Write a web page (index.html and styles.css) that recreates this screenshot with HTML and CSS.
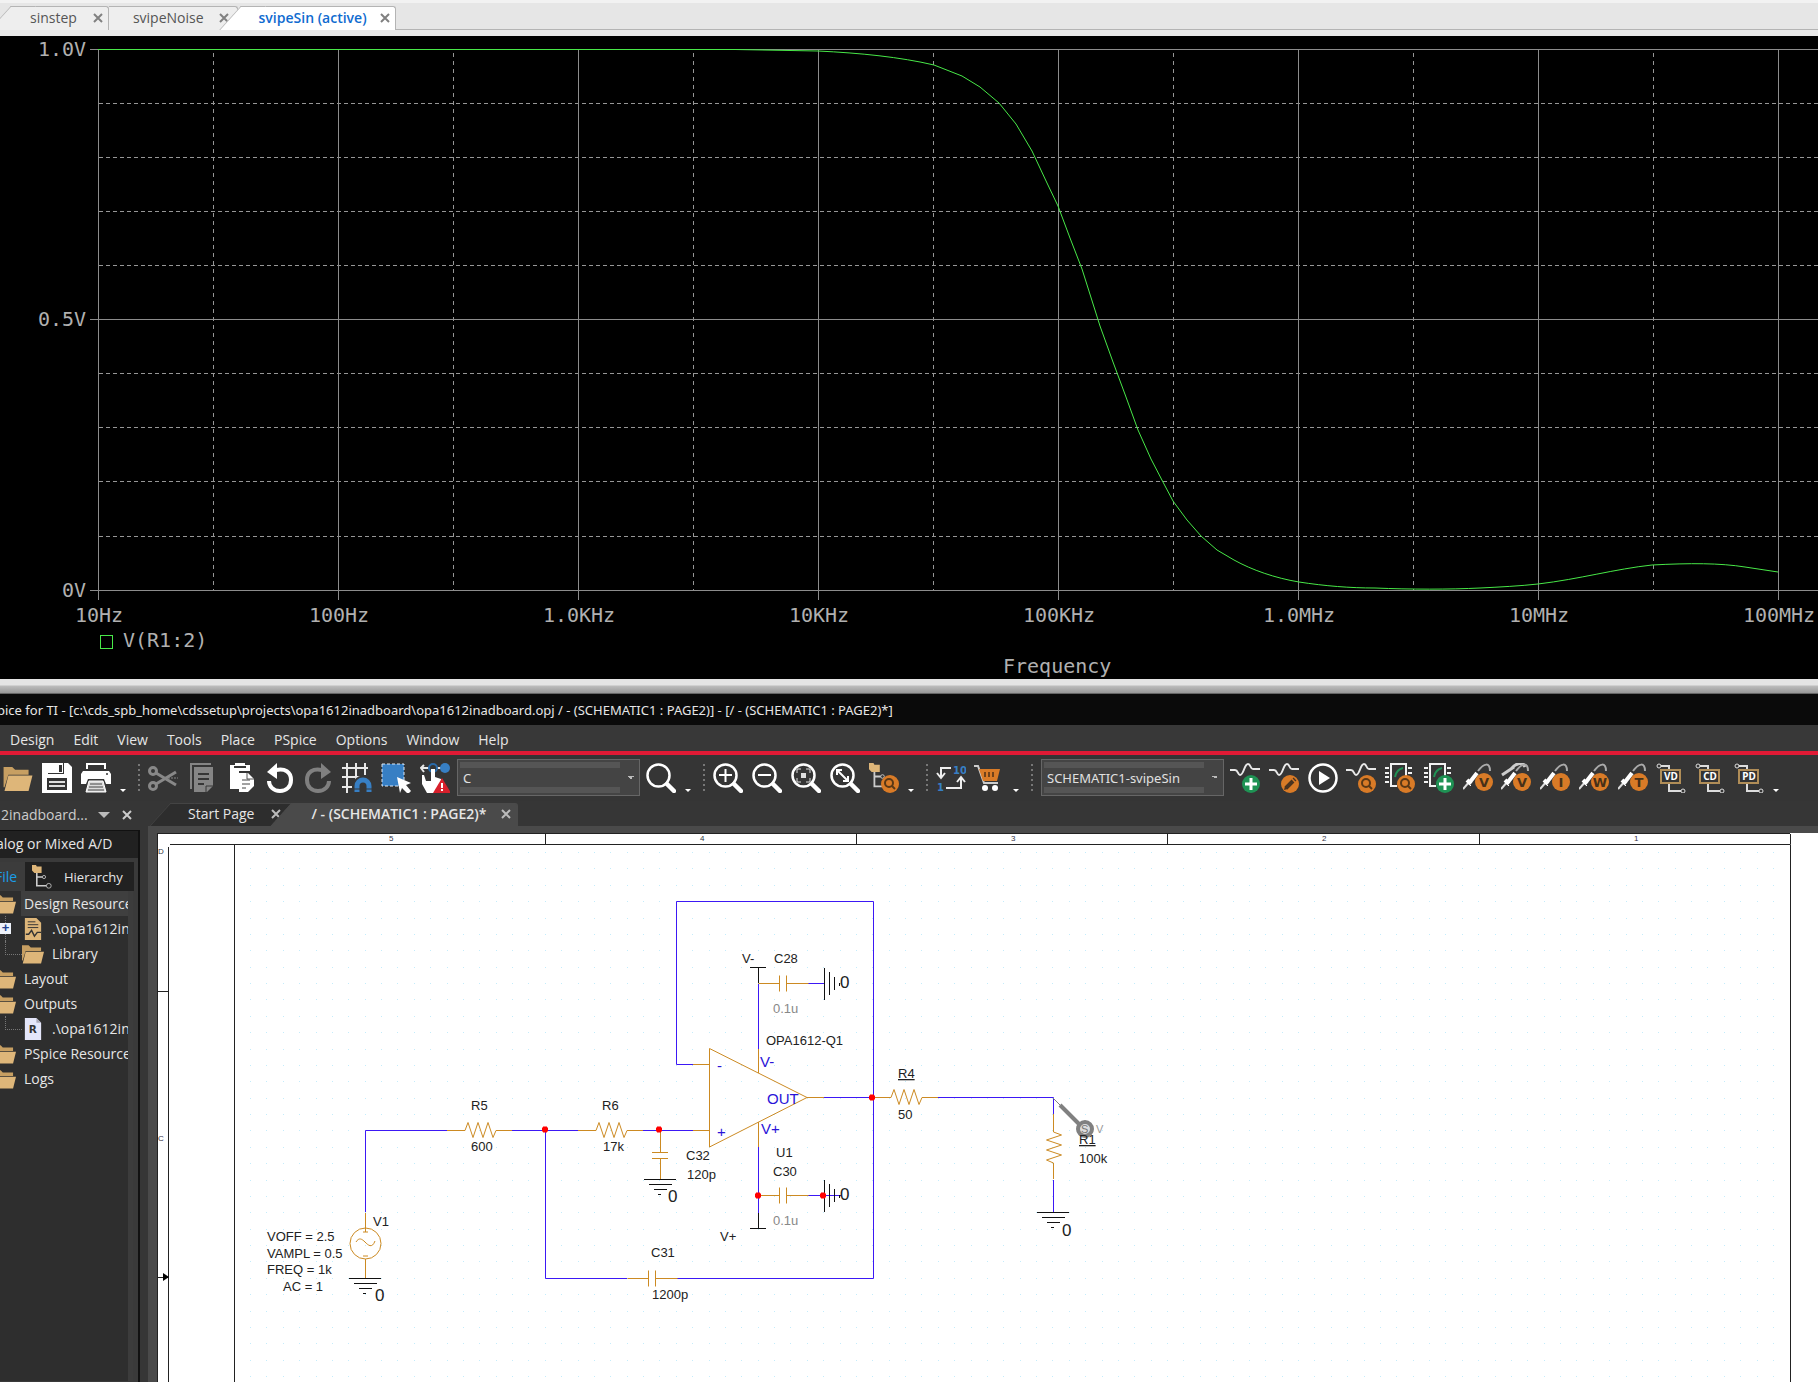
FILE: index.html
```html
<!DOCTYPE html>
<html lang="en">
<head>
<meta charset="utf-8">
<title>PSpice for TI</title>
<link rel="stylesheet" href="styles.css">
</head>
<body>

<svg class="defs" aria-hidden="true">
  <defs>
    <symbol id="close" viewBox="0 0 10 10"><path d="M1 1l8 8M9 1l-8 8" fill="none" stroke="currentColor" stroke-width="2"/></symbol>
    <symbol id="folder" viewBox="0 0 30 26">
      <path d="M0 1h9l3 3h14v5H5L1 22H0z" fill="#c79f62"/>
      <path d="M5 10h25l-4 16H1z" fill="#deb679"/>
    </symbol>
    <symbol id="lens" viewBox="0 0 30 30">
      <circle cx="12.500" cy="12.500" r="11" fill="none" stroke="#fff" stroke-width="2.500"/>
      <path d="M21 21l7 7" stroke="#fff" stroke-width="4.500" stroke-linecap="round"/>
    </symbol>
    <symbol id="wave" viewBox="0 0 30 30">
      <path d="M0 7h5c3 0 3 5 5 5 4 0 4-11 8-11 3 0 2 5 5 5h7" fill="none" stroke="#e8e8e8" stroke-width="2"/>
    </symbol>
    <symbol id="plus" viewBox="0 0 30 30">
      <circle cx="21" cy="21" r="9" fill="#1f9254"/>
      <path d="M21 15v12M15 21h12" stroke="#fff" stroke-width="3"/>
    </symbol>
    <symbol id="find" viewBox="0 0 30 30">
      <circle cx="21" cy="21" r="9" fill="#d97b27"/>
      <circle cx="20" cy="20" r="4" fill="none" stroke="#5a3816" stroke-width="2"/>
      <path d="M23 23l3 3" stroke="#5a3816" stroke-width="2"/>
    </symbol>
    <symbol id="chip" viewBox="0 0 30 30">
      <path d="M12 23H6V1h15v14M0 5h4M0 10h4M0 14h4M0 19h4M23 5h4M23 10h4" fill="none" stroke="#f2f2f2" stroke-width="2"/>
      <path d="M10 14c1-5 3-8 8-9" fill="none" stroke="#1f9254" stroke-width="2"/>
    </symbol>
    <symbol id="probe" viewBox="0 0 30 30">
      <path d="M15 8c6-8 12-9 12 0" fill="none" stroke="#aaa" stroke-width="2"/>
      <path d="M0 26l7-8" stroke="#ddd" stroke-width="2"/>
      <path d="M4 17l4 4M7 19l7-9" stroke="#fff" stroke-width="4"/>
      <path d="M3 18l5 5" stroke="#fff" stroke-width="1"/>
      <circle cx="21" cy="19" r="9" fill="#d97b27"/>
    </symbol>
    <symbol id="diff" viewBox="0 0 30 30">
      <path d="M4 3h9v5M13 20v8h12" fill="none" stroke="#ddd" stroke-width="2"/>
      <circle cx="3" cy="3" r="2" fill="#363636" stroke="#ddd"/>
      <circle cx="27" cy="28" r="2" fill="#363636" stroke="#ddd"/>
      <rect x="5" y="7" width="19" height="13" fill="#333" stroke="#b08d57" stroke-width="2"/>
    </symbol>
    <symbol id="tree" viewBox="0 0 30 30">
      <path d="M0 0h5l1 2h6v8H3L0 7z" fill="#deb679"/>
      <path d="M6 10v16h12M6 15h7" fill="none" stroke="#ccc" stroke-width="2"/>
      <circle cx="15" cy="15" r="2" fill="none" stroke="#ccc" stroke-width="1"/>
      <circle cx="21" cy="26" r="3" fill="none" stroke="#ccc" stroke-width="1"/>
    </symbol>
  </defs>
</svg>

<header class="plot-tabs" role="tablist">
  <div class="tab slanted"><button role="tab">sinstep</button><button class="close" aria-label="Close sinstep"><svg><use href="#close"/></svg></button></div>
  <div class="tab"><button role="tab">svipeNoise</button><button class="close" aria-label="Close svipeNoise"><svg><use href="#close"/></svg></button></div>
  <div class="tab slanted active"><button role="tab" aria-selected="true">svipeSin (active)</button><button class="close" aria-label="Close svipeSin"><svg><use href="#close"/></svg></button></div>
</header>

<svg class="plot" viewBox="0 36 1818 643" role="img" aria-label="V(R1:2) over frequency">
  <g class="dashed across">
    <path d="M99 103.500H1818M99 157.500H1818M99 211.500H1818M99 265.500H1818M99 373.500H1818M99 427.500H1818M99 481.500H1818M99 536.500H1818"/>
  </g>
  <g class="dashed down">
    <path d="M213.500 53V590M453.500 53V590M693.500 53V590M933.500 53V590M1173.500 53V590M1413.500 53V590M1653.500 53V590"/>
  </g>
  <path class="axis" d="M90 49.500H1818M90 319.500H1818M90 590.500H1818M98.500 49V600M338.500 49V600M578.500 49V600M818.500 49V600M1058.500 49V600M1298.500 49V600M1538.500 49V600M1778.500 49V600"/>
  <path class="trace" d="M98 49.500H735L818 51C860 53 900 57 934 65L962 76 980 87 999 103 1016 124 1032 151 1047 183 1058 206 1070 238 1082 269 1100 326 1113 362 1126 397 1138 430 1151 459 1164 484 1173 501 1187 520 1201 536 1217 550 1234 560C1252 570 1275 578 1299 582 1325 586 1350 588 1375 588 1410 589.500 1450 589.500 1480 588 1500 587 1520 586 1538 584 1580 579 1615 569 1652 565 1690 563 1720 563 1745 567L1778 572"/>
  <g class="plot-text">
    <text x="38" y="56">1.0V</text><text x="38" y="326">0.5V</text><text x="62" y="597">0V</text>
    <g text-anchor="middle">
      <text x="99" y="622">10Hz</text><text x="339" y="622">100Hz</text><text x="579" y="622">1.0KHz</text><text x="819" y="622">10KHz</text>
      <text x="1059" y="622">100KHz</text><text x="1299" y="622">1.0MHz</text><text x="1539" y="622">10MHz</text><text x="1779" y="622">100MHz</text>
    </g>
    <text x="123" y="647">V(R1:2)</text>
    <text x="1003" y="673">Frequency</text>
  </g>
  <rect class="trace" x="100.500" y="635.500" width="12" height="13"/>
</svg>

<div class="splitter"></div>

<div class="titlebar">pice for TI - [c:\cds_spb_home\cdssetup\projects\opa1612inadboard\opa1612inadboard.opj / - (SCHEMATIC1 : PAGE2)] - [/ - (SCHEMATIC1 : PAGE2)*]</div>

<nav class="menubar">
  <button>Design</button><button>Edit</button><button>View</button><button>Tools</button><button>Place</button><button>PSpice</button><button>Options</button><button>Window</button><button>Help</button>
</nav>

<div class="toolbar" role="toolbar">
  <div class="icons files">
    <button aria-label="Open"><svg viewBox="0 0 30 30"><use href="#folder" y="3" width="30" height="25"/></svg></button>
    <button aria-label="Save"><svg viewBox="0 0 30 30"><path fill="#fff" d="M0 0h26l4 4v26H0z"/><path fill="#333" d="M6 0h16v11H6zM5 15h20v12H5z"/><path fill="#fff" d="M6 0h15v10H6z"/><path fill="#333" d="M17 2h3v7h-3z"/><path d="M7 19h16M7 23h16" stroke="#ddd" stroke-width="2"/></svg></button>
    <button aria-label="Print"><svg viewBox="0 0 30 30"><path d="M6 6V1h18v5" fill="none" stroke="#fff" stroke-width="2"/><path fill="#fff" d="M2 8h26l2 3v10h-5l-2-5H7l-2 5H0V11z"/><path fill="#ddd" stroke="#fff" d="M8 18h14l3 11H5z"/><path d="M9 21h12M8 24h14M7 27h16" stroke="#444"/><circle cx="26" cy="11" r="1" fill="#333"/></svg></button>
  </div>
  <i class="caret"></i>
  <i class="grip"></i>
  <div class="icons edit">
    <button aria-label="Cut"><svg viewBox="0 0 30 30"><g fill="none" stroke="#888" stroke-width="3"><circle cx="5" cy="8" r="3.500"/><circle cx="5" cy="23" r="3.500"/><path d="M8 10l20 12M8 21L28 9"/></g><path d="M20 15h10" stroke="#888" stroke-dasharray="2 1"/></svg></button>
    <button aria-label="Copy"><svg viewBox="0 0 30 30"><path d="M4 26V1h20" fill="none" stroke="#858585" stroke-width="2"/><path fill="#858585" d="M7 4h19v19l-6 6H7z"/><path d="M11 11h11M11 16h11M11 21h6" stroke="#363636" stroke-width="2"/><path d="M19 30v-7h7" fill="none" stroke="#363636"/></svg></button>
    <button aria-label="Paste"><svg viewBox="0 0 30 30"><path fill="#fff" d="M4 2h5V0h10v2h5v6H13v18H4z"/><path d="M8 4h12" stroke="#363636" stroke-width="2"/><path fill="#fff" d="M13 10h9l6 6v7l-6 6H13z"/><path d="M16 17h8M16 21h8M16 25h4" stroke="#444" stroke-width="1"/><path d="M21 10v6h7" fill="none" stroke="#555"/></svg></button>
    <button aria-label="Undo"><svg viewBox="0 0 30 30"><path d="M11 7c9-2 15 2 15 10 0 7-5 11-11 11-7 0-11-5-11-10" fill="none" stroke="#fff" stroke-width="4"/><path fill="#fff" d="M2 9l10-9v16z"/></svg></button>
    <button aria-label="Redo"><svg viewBox="0 0 30 30"><path d="M19 7C10 5 4 9 4 17c0 7 5 11 11 11 7 0 11-5 11-10" fill="none" stroke="#808080" stroke-width="4"/><path fill="#808080" d="M28 9L18 0v16z"/></svg></button>
    <button aria-label="Snap to grid"><svg viewBox="0 0 30 30"><path d="M0 5h26M0 14h20M0 24h10M5 0v30M14 0v17M23 0v12" fill="none" stroke="#e8e8e8" stroke-width="2"/><path d="M14 29v-6a7 7 0 0 1 14 0v6" fill="none" stroke="#363636" stroke-width="7"/><path d="M15 29v-6a6 6 0 0 1 12 0v6" fill="none" stroke="#377fc4" stroke-width="5"/><path d="M12 26h6M24 26h6" stroke="#363636"/></svg></button>
    <button aria-label="Area select"><svg viewBox="0 0 30 30"><rect x="1" y="1" width="22" height="22" fill="#377fc4" stroke="#dbe9f7" stroke-dasharray="3 2"/><path fill="#fff" d="M16 14l14 6-5 2 5 6-3 3-6-6-2 5z"/></svg></button>
    <button aria-label="Drag connected"><svg viewBox="0 0 30 30"><path d="M1 5h8M4 2L1 5l3 4M17 5h6" fill="none" stroke="#e8e8e8" stroke-width="2"/><circle cx="13" cy="5" r="4" fill="none" stroke="#2a6aa8" stroke-width="2"/><circle cx="25" cy="5" r="5" fill="#377fc4"/><path fill="#fff" d="M11 6h4v8l6 2v14H7l-5-9V12h2l2 6h5z"/><path fill="#d8202c" d="M22 15l9 15H13z"/><path d="M22 20v5M22 26v2" stroke="#fff" stroke-width="2"/></svg></button>
  </div>
  <select class="combo" aria-label="Part"><option>C</option></select>
  <div class="icons"><button aria-label="Search"><svg viewBox="0 0 30 30"><use href="#lens"/></svg></button></div>
  <i class="caret"></i>
  <i class="grip"></i>
  <div class="icons zoom">
    <button aria-label="Zoom in"><svg viewBox="0 0 30 30"><use href="#lens"/><path d="M6 12h13M12.500 6v13" stroke="#fff" stroke-width="2"/></svg></button>
    <button aria-label="Zoom out"><svg viewBox="0 0 30 30"><use href="#lens"/><path d="M6 12h13" stroke="#fff" stroke-width="2"/></svg></button>
    <button aria-label="Zoom to selection"><svg viewBox="0 0 30 30"><use href="#lens"/><rect x="10" y="10" width="5" height="5" fill="#ddd"/><path d="M6 10V6h4M15 6h4v4M19 15v4h-4M10 19H6v-4" fill="none" stroke="#ddd" stroke-width="1"/></svg></button>
    <button aria-label="Zoom to fit"><svg viewBox="0 0 30 30"><use href="#lens"/><path d="M7 7l11 11M7 12V7h5M18 13v5h-5" fill="none" stroke="#fff" stroke-width="2"/></svg></button>
    <button aria-label="Find in hierarchy"><svg viewBox="0 0 30 30"><use href="#tree" width="27" height="27"/><use href="#find"/></svg></button>
  </div>
  <i class="caret"></i>
  <i class="grip"></i>
  <div class="icons swap">
    <button aria-label="Renumber"><svg viewBox="0 0 30 30"><path d="M15 5H5v9M1 10l4 5 4-5M10 25h15V15M21 19l4-5 4 5" fill="none" stroke="#eee" stroke-width="2"/><text class="num" x="17" y="11">10</text><text class="num" x="1" y="28">1</text></svg></button>
    <button aria-label="Part cart"><svg viewBox="0 0 30 30"><path d="M0 3h4l6 17h14" fill="none" stroke="#ccc" stroke-width="2"/><path fill="#d97b27" d="M5 6h21l-3 12H9z"/><path d="M11 9v5M15 9v5M19 9v5" stroke="#70421a" stroke-width="2"/><circle cx="11" cy="25" r="3" fill="#fff"/><circle cx="21" cy="25" r="3" fill="#fff"/></svg></button>
  </div>
  <i class="caret"></i>
  <i class="grip"></i>
  <select class="combo" aria-label="Simulation profile"><option>SCHEMATIC1-svipeSin</option></select>
  <div class="icons sim">
    <button aria-label="New profile"><svg viewBox="0 0 30 30"><use href="#wave"/><use href="#plus"/></svg></button>
    <button aria-label="Edit profile"><svg viewBox="0 0 30 30"><use href="#wave"/><circle cx="21" cy="21" r="9" fill="#d97b27"/><path d="M17 25l7-7M25 17l1-1" stroke="#4a3320" stroke-width="4"/><path d="M15 27l1-4 3 3z" fill="#4a3320"/></svg></button>
    <button aria-label="Run"><svg viewBox="0 0 30 30"><circle cx="15" cy="15" r="13.500" fill="none" stroke="#fff" stroke-width="2.500"/><path fill="#fff" d="M11 8l11 7-11 7z"/></svg></button>
    <button aria-label="View results"><svg viewBox="0 0 30 30"><use href="#wave"/><use href="#find"/></svg></button>
    <button aria-label="Find model"><svg viewBox="0 0 30 30"><use href="#chip"/><use href="#find"/></svg></button>
    <button aria-label="Add model"><svg viewBox="0 0 30 30"><use href="#chip"/><use href="#plus"/></svg></button>
    <button aria-label="Voltage marker"><svg viewBox="0 0 30 30"><use href="#probe"/><text class="mark" x="21" y="24">V</text></svg></button>
    <button aria-label="Differential marker"><svg viewBox="0 0 30 30"><path d="M1 12l12-8M10 6c5-6 12-8 14-2" fill="none" stroke="#ccc" stroke-width="3"/><use href="#probe"/><text class="mark" x="21" y="24">V</text></svg></button>
    <button aria-label="Current marker"><svg viewBox="0 0 30 30"><use href="#probe"/><text class="mark" x="21" y="24">I</text></svg></button>
    <button aria-label="Power marker"><svg viewBox="0 0 30 30"><use href="#probe"/><text class="mark" x="21" y="24">W</text></svg></button>
    <button aria-label="Temperature marker"><svg viewBox="0 0 30 30"><use href="#probe"/><text class="mark" x="21" y="24">T</text></svg></button>
    <button aria-label="Voltage density"><svg viewBox="0 0 30 30"><use href="#diff"/><text class="tag" x="15" y="17">VD</text></svg></button>
    <button aria-label="Current density"><svg viewBox="0 0 30 30"><use href="#diff"/><text class="tag" x="15" y="17">CD</text></svg></button>
    <button aria-label="Power density"><svg viewBox="0 0 30 30"><use href="#diff"/><text class="tag" x="15" y="17">PD</text></svg></button>
  </div>
  <i class="caret"></i>
</div>

<main class="workspace">
  <aside class="project">
    <div class="project-head"><span>2inadboard...</span><i class="down"></i><button class="close" aria-label="Close project"><svg><use href="#close"/></svg></button></div>
    <div class="project-body">
      <div class="kind">alog or Mixed A/D</div>
      <div class="views" role="tablist">
        <button role="tab" aria-selected="true" class="view on">File</button>
        <button role="tab" class="view"><svg class="view-icon"><use href="#tree"/></svg>Hierarchy</button>
      </div>
      <ul class="files-tree">
        <li class="row selected"><svg class="fold"><use href="#folder"/></svg><span>Design Resources</span></li>
        <li class="row child plus"><svg class="fold" viewBox="0 0 23 23"><path fill="#deb679" d="M3 0h12l5 5v18H3z"/><path d="M6 4h8M6 7h11M6 10h11" stroke="#333"/><path d="M4 17h3l3-4 3 6 3-4h4" fill="none" stroke="#333" stroke-width="1.500"/></svg><span>.\opa1612inadboard</span></li>
        <li class="row child last"><svg class="fold"><use href="#folder"/></svg><span>Library</span></li>
        <li class="row"><svg class="fold"><use href="#folder"/></svg><span>Layout</span></li>
        <li class="row"><svg class="fold"><use href="#folder"/></svg><span>Outputs</span></li>
        <li class="row child last"><svg class="fold" viewBox="0 0 23 23"><path fill="#e4e6fa" d="M3 0h12l5 5v18H3z"/><path fill="#aab" d="M15 0l5 5h-5z"/><text class="report" x="7" y="16">R</text></svg><span>.\opa1612inadboard</span></li>
        <li class="row"><svg class="fold"><use href="#folder"/></svg><span>PSpice Resources</span></li>
        <li class="row"><svg class="fold"><use href="#folder"/></svg><span>Logs</span></li>
      </ul>
    </div>
  </aside>

  <section class="editor">
    <div class="doc-tabs" role="tablist">
      <div class="tab slanted"><button role="tab">Start Page</button><button class="close" aria-label="Close Start Page"><svg><use href="#close"/></svg></button></div>
      <div class="tab slanted active"><button role="tab" aria-selected="true">/ - (SCHEMATIC1 : PAGE2)*</button><button class="close" aria-label="Close PAGE2"><svg><use href="#close"/></svg></button></div>
    </div>
    <div class="sheet">
    <svg class="schematic" viewBox="157 833 1661 549" role="img" aria-label="Schematic page 2">
      <defs>
        <pattern id="dots" x="250" y="852" width="131" height="131" patternUnits="userSpaceOnUse">
          <g fill="none" stroke="#c4ecfb">
            <path id="dotrow" d="M0 .5h1M16 .5h1M33 .5h1M49 .5h1M66 .5h1M82 .5h1M98 .5h1M115 .5h1"/>
            <use href="#dotrow" y="16"/><use href="#dotrow" y="33"/><use href="#dotrow" y="49"/><use href="#dotrow" y="66"/><use href="#dotrow" y="82"/><use href="#dotrow" y="98"/><use href="#dotrow" y="115"/>
          </g>
        </pattern>
        <path id="res" d="M0 0h18l3-8 5 15 5-15 5 15 5-15 5 15 3-7h16"/>
        <path id="cap" d="M0 0h21M21-8V8M28-8V8M28 0h22"/>
        <path id="gnd" d="M-16 0h32M-11 5h23M-6 10h13M-2 15h3"/>
      </defs>
      <rect x="240" y="848" width="1548" height="534" fill="url(#dots)"/>
      <path class="frame" d="M157 833.500H1790M157.500 833V1382M170 844.500H1790.500V1382M168.500 847V1382M234.500 844V1382M545.500 834V844M856.500 834V844M1167.500 834V844M1479.500 834V844M1790.500 834V844M157 991.500H168M157 1277.500H168"/>
      <path d="M163 1273l6 4-6 4z"/>
      <g class="zone"><text x="389" y="841">5</text><text x="700" y="841">4</text><text x="1011" y="841">3</text><text x="1322" y="841">2</text><text x="1634" y="841">1</text><text x="158" y="854">D</text><text x="158" y="1141">C</text></g>

      <path class="wire" d="M693 1064.500H676.500V901.500H873.500V1278.500H676M758.500 984V1049M808 983.500H824M824 1097.500H873M758.500 1147V1213M808 1195.500H841M365.500 1212V1130.500H447M512 1130.500H578M545.500 1131V1278.500H627M643 1130.500H693M938 1097.500H1053.500V1114M1053.500 1180V1212"/>
      <g class="part">
        <path d="M709.500 1048.500V1147L807 1097.500ZM693 1064.500H709M693 1130.500H709M807 1097.500H824M758.500 1049V1073M758.500 1122V1147"/>
        <use href="#res" x="447" y="1130.500"/><use href="#res" x="578" y="1130.500"/><use href="#res" x="873" y="1097.500"/>
        <use href="#res" transform="translate(1053.500 1114) rotate(90)"/>
        <use href="#cap" x="758.500" y="983.500"/><use href="#cap" x="758.500" y="1195.500"/><use href="#cap" x="627.500" y="1278.500"/>
        <path d="M660.500 1131V1152M652 1152.500H668M652 1158.500H668M660.500 1159V1179"/>
        <path d="M365.500 1213V1232M365.500 1259V1278M363 1232h5M363 1256h5M356 1242c3-5 6-3 9 0s7 7 10-1"/>
        <circle cx="365.500" cy="1243.500" r="15.500"/>
      </g>
      <g class="ground">
        <use href="#gnd" x="660" y="1179.500"/><use href="#gnd" x="365" y="1278.500"/><use href="#gnd" x="1053" y="1212.500"/>
        <use href="#gnd" transform="translate(824.500 984) rotate(-90)"/><use href="#gnd" transform="translate(824.500 1196) rotate(-90)"/>
        <path d="M750 967.500H766M758.500 968V983M750 1228.500H766M758.500 1213V1228"/>
      </g>
      <path class="joint" d="M659 1126.500v6M656 1129.500h6M545 1126.500v6M542 1129.500h6M872 1094.500v6M869 1097.500h6M758 1192.500v6M755 1195.500h6M823 1192.500v6M820 1195.500h6"/>
      <g class="pin"><text x="760" y="1067">V-</text><text x="761" y="1134">V+</text><text x="767" y="1104">OUT</text><text x="717" y="1071">-</text><text x="717" y="1137">+</text></g>
      <g class="label">
        <text x="742" y="963">V-</text><text x="774" y="963">C28</text><text x="766" y="1045">OPA1612-Q1</text>
        <text x="776" y="1157">U1</text><text x="773" y="1176">C30</text><text x="720" y="1241">V+</text>
        <text x="686" y="1160">C32</text><text x="687" y="1179">120p</text><text x="651" y="1257">C31</text><text x="652" y="1299">1200p</text>
        <text x="471" y="1110">R5</text><text x="471" y="1151">600</text><text x="602" y="1110">R6</text><text x="603" y="1151">17k</text>
        <text x="373" y="1226">V1</text><text x="267" y="1241">VOFF = 2.5</text><text x="267" y="1258">VAMPL = 0.5</text><text x="267" y="1274">FREQ = 1k</text><text x="283" y="1291">AC = 1</text>
        <text x="898" y="1078" text-decoration="underline">R4</text><text x="898" y="1119">50</text>
        <text x="1079" y="1163">100k</text>
      </g>
      <g class="label pale"><text x="773" y="1013">0.1u</text><text x="773" y="1225">0.1u</text></g>
      <g class="zero"><text x="840" y="988">0</text><text x="840" y="1200">0</text><text x="668" y="1202">0</text><text x="375" y="1301">0</text><text x="1062" y="1236">0</text></g>
      <path d="M1053 1098l8 8" stroke="#808080"/>
      <path d="M1060 1105l19 19" stroke="#808080" stroke-width="4"/>
      <circle cx="1085" cy="1129" r="7" fill="#ddd" stroke="#808080" stroke-width="4"/>
      <g class="probe-text"><text x="1081" y="1133">S</text><text class="volt" x="1096" y="1133">V</text></g>
      <text class="label" x="1079" y="1144" text-decoration="underline">R1</text>
    </svg>
    </div>
  </section>
</main>
</body>
</html>
```
FILE: styles.css
```css
* { box-sizing: border-box; }
body {
  margin: 0;
  min-height: 100vh;
  display: flex;
  flex-direction: column;
  background: #363636;
  color: #e6e6e6;
  font: 14px/20px "Open Sans", "Noto Sans", sans-serif;
  overflow-x: hidden;
}
button { margin: 0; padding: 0; border: 0; background: none; color: inherit; font: inherit; white-space: nowrap; }
svg { display: block; }
.defs { position: absolute; width: 0; height: 0; }

/* Tabs, shared by the plot window and the editor */
.tab { position: relative; display: flex; align-items: center; border: 1px solid var(--edge); border-width: 1px 1px 0 0; background: var(--face); border-radius: 0 3px 0 0; }
.tab button { position: relative; }
.slanted::before {
  content: "";
  position: absolute;
  left: -12px;
  top: -1px;
  bottom: 0;
  width: 24px;
  border: 1px solid var(--edge);
  border-width: 1px 0 0 1px;
  background: var(--face);
  transform: skewX(-42deg);
}
.close svg { width: 10px; height: 10px; }

.plot-tabs {
  --edge: #b4b4b4;
  --face: #eeeeee;
  display: flex;
  height: 36px;
  padding: 6px 0 6px 12px;
  background: linear-gradient(#f2f2f2 0 3px, #e6e6e6 3px 29px, #b4b4b4 29px 30px, #e8e8e8 30px);
  color: #555;
}
.plot-tabs .tab { gap: 16px; height: 24px; padding: 0 5px 1px 18px; }
.plot-tabs .tab:nth-child(2) { gap: 15px; padding: 0 8px 1px 24px; }
.plot-tabs .active { --face: #fff; gap: 13px; margin-left: 4px; padding-left: 17px; color: #0f6bd0; font-weight: 600; }
.plot-tabs .close { color: #808080; }

.plot { width: 100%; height: auto; background: #000; }
.axis { fill: none; stroke: #8c8c8c; }
.dashed { fill: none; stroke: #969696; }
.across { stroke-dasharray: 4 3; }
.down { stroke-dasharray: 4 4; }
.trace { fill: none; stroke: #48e848; stroke-width: 1; }
.plot-text { fill: #b0b0b0; font: 20px "DejaVu Sans Mono", monospace; }

.splitter { height: 15px; background: linear-gradient(#e4e4e4 0 6px, #bcbcbc 7px, #989898 14px, #333 15px); }
.titlebar { height: 31px; margin-left: -3px; background: #0a0a0a; font: 13px/33px "Noto Sans", sans-serif; white-space: nowrap; overflow: hidden; }
.menubar { display: flex; height: 30px; padding-top: 4px; background: #383838; border-bottom: 4px solid #e01a35; }
.menubar button { padding: 0 9px 0 10px; }

.toolbar { display: flex; align-items: center; height: 46px; padding: 0 0 1px 3px; background: #353535; }
.icons { display: flex; flex: none; justify-content: space-between; }
.icons svg { width: 30px; height: 30px; }
.files { width: 108px; }
.edit { width: 302px; }
.zoom { width: 186px; }
.swap { width: 68px; }
.sim { width: 534px; }
.caret { flex: none; align-self: flex-end; margin: 0 11px 8px 9px; border: 3px solid transparent; border-top-color: #fff; border-bottom: 0; }
.grip { flex: none; width: 2px; height: 28px; margin: 0 8px 0 1px; background: repeating-linear-gradient(#777 0 2px, transparent 2px 5px); }
.num { fill: #377fc4; font: bold 10px "DejaVu Sans", sans-serif; }
.mark { fill: #463018; font: bold 13px "DejaVu Sans", sans-serif; text-anchor: middle; }
.tag { fill: #fff; font: bold 10px "Noto Sans", sans-serif; text-anchor: middle; }
.combo {
  flex: none;
  width: 183px;
  height: 37px;
  margin: 0 6px 0 7px;
  padding: 0 20px 0 5px;
  appearance: none;
  border: 1px solid #666;
  border-radius: 0;
  background:
    linear-gradient(45deg, transparent 50%, #bbb 50%) 170px 16px / 3px 3px no-repeat,
    linear-gradient(-45deg, transparent 50%, #bbb 50%) 173px 16px / 3px 3px no-repeat,
    linear-gradient(#555 0 6px, transparent 6px 25px, #555 25px) 2px 2px / 160px 31px no-repeat,
    #444;
  color: #e0e0e0;
  font: 13px "Noto Sans", sans-serif;
}
.grip + .combo { margin-left: 0; }

.workspace { display: flex; flex: 1; }
.project { flex: none; display: flex; flex-direction: column; width: 140px; overflow: hidden; }
.project-head { display: flex; align-items: center; height: 29px; padding: 0 0 2px 1px; color: #ccc; }
.down { margin: 0 12px 0 10px; border: 6px solid transparent; border-top-color: #bbb; border-bottom: 0; }
.project-body { flex: 1; border: solid #111; border-width: 1px 2px 0 0; background: #3a3a3a; }
.kind { height: 27px; margin-left: -4px; background: #212121; line-height: 26px; white-space: nowrap; }
.views { display: flex; height: 33px; padding: 4px 4px 0 0; color: #e6e6e6; }
.view { display: flex; align-items: center; gap: 8px; background: #212121; flex: 1; padding-left: 7px; font-size: 13px; }
.view.on { flex: none; width: 25px; padding-left: 0; background: #3c3c3c; color: #1a9fe8; font-size: 14px; text-indent: -5px; }
.view-icon { width: 24px; height: 24px; }
.files-tree { margin: 0 5px 0 0; padding: 0; border-right: 5px solid #3c3c3c; background: #2e2e2e; min-height: 490px; list-style: none; overflow: hidden; }
.row { position: relative; display: flex; align-items: center; gap: 8px; height: 25px; margin-left: -6px; white-space: nowrap; }
.selected { background: linear-gradient(90deg, transparent 27px, #3f3f3f 27px); }
.fold { flex: none; width: 22px; height: 22px; }
.child { padding-left: 28px; }
.child::before { content: ""; position: absolute; left: 11px; top: 0; width: 16px; height: 13px; border: dotted #777; border-width: 0 0 1px 1px; }
.plus::before { height: 25px; border-bottom: 0; }
.plus::after { content: "+"; position: absolute; left: 6px; top: 7px; width: 11px; height: 11px; background: #eef2fa; color: #23408e; font: bold 13px/10px "Liberation Sans", sans-serif; text-align: center; }
.report { fill: #333; font: bold 11px "DejaVu Sans", sans-serif; }

.editor { flex: 1; min-width: 0; display: flex; flex-direction: column; padding-left: 8px; }
.doc-tabs { --edge: #444; --face: #2d2d2d; display: flex; height: 25px; padding: 2px 0 0 24px; }
.doc-tabs .tab { gap: 17px; padding: 0 11px 2px 16px; }
.doc-tabs .active { --face: #4a4a4a; --edge: #4a4a4a; gap: 15px; padding: 0 6px 2px 18px; font-weight: 600; }
.doc-tabs .close { color: #bbb; }
.sheet { flex: 1; padding: 7px 0 0 9px; background: #4a4a4a; }
.schematic { width: 100%; height: auto; min-height: 549px; background: #fff; }
.frame { fill: none; stroke: #222; }
.wire { fill: none; stroke: #3c18f5; stroke-width: 1; }
.part { fill: none; stroke: #cc8a22; }
.ground { fill: none; stroke: #111; stroke-width: 1; }
.joint { fill: none; stroke: #f00; stroke-width: 4; }
.zone { fill: #334; font: 8px "Liberation Sans", sans-serif; }
.label { fill: #222; font: 13px "Liberation Sans", sans-serif; }
.pale { fill: #888; }
.pin { fill: #2a14d8; font: 15px "Liberation Sans", sans-serif; }
.zero { fill: #222; font: 17px "Liberation Sans", sans-serif; }
.probe-text { fill: #777; font: 11px "Liberation Sans", sans-serif; }
.volt { fill: #999; }
```
